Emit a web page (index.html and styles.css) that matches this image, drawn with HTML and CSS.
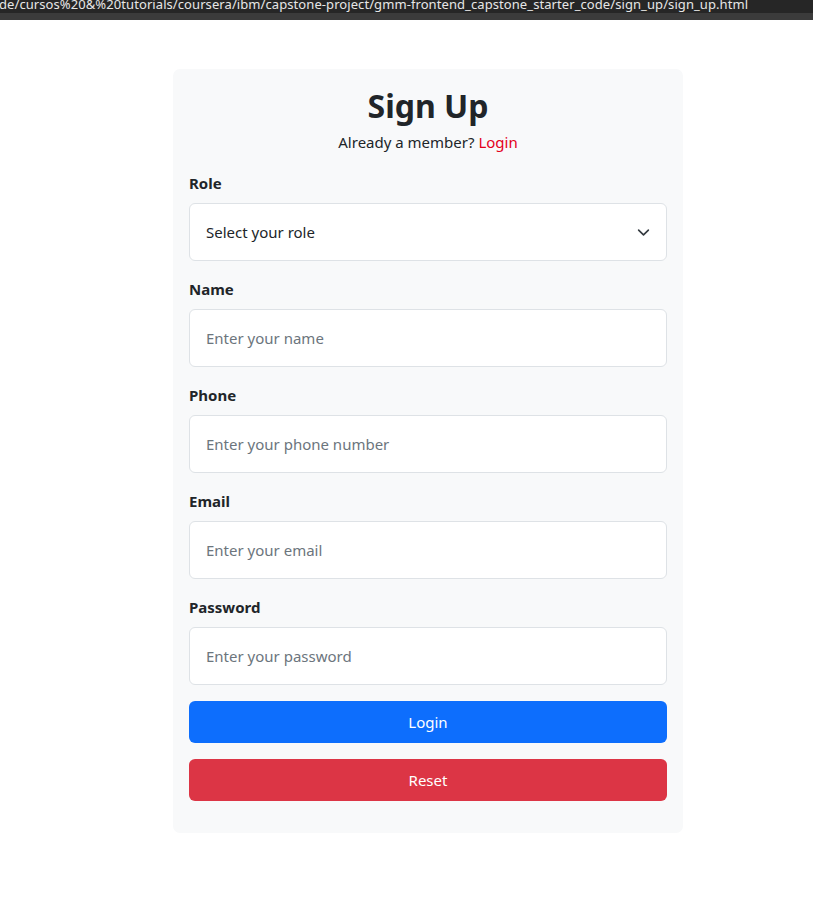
FILE: index.html
```html
<!DOCTYPE html>
<html lang="en">
<head>
<meta charset="utf-8">
<title>Sign Up</title>
<link rel="stylesheet" href="styles.css">
</head>
<body>
<div class="chrome">
  <div class="url"><span>de/cursos%20&amp;%20tutorials/coursera/ibm/capstone-project/gmm-frontend_capstone_starter_code/sign_up/sign_up.html</span></div>
  <div class="chrome-strip"></div>
</div>
<main class="page">
  <form class="card">
    <h1 class="title">Sign Up</h1>
    <p class="sub">Already a member? <a href="#" class="link">Login</a></p>

    <div class="field">
      <label class="label" for="role">Role</label>
      <div class="select">
        <span class="select-text">Select your role</span>
        <svg class="chev" width="16" height="16" viewBox="0 0 16 16"><path d="M2 5l6 6 6-6" fill="none" stroke="#343a40" stroke-width="2" stroke-linecap="round" stroke-linejoin="round"/></svg>
      </div>
    </div>

    <div class="field">
      <label class="label" for="name">Name</label>
      <input class="input" id="name" type="text" placeholder="Enter your name">
    </div>

    <div class="field">
      <label class="label" for="phone">Phone</label>
      <input class="input" id="phone" type="tel" placeholder="Enter your phone number">
    </div>

    <div class="field">
      <label class="label" for="email">Email</label>
      <input class="input" id="email" type="email" placeholder="Enter your email">
    </div>

    <div class="field">
      <label class="label" for="password">Password</label>
      <input class="input" id="password" type="password" placeholder="Enter your password">
    </div>

    <button type="button" class="btn btn-primary">Login</button>
    <button type="button" class="btn btn-danger">Reset</button>
  </form>
</main>
</body>
</html>
```

FILE: styles.css
```css
* { box-sizing: border-box; }
html, body { margin: 0; padding: 0; background: #fff; }
body {
  font-family: "Noto Sans", "Open Sans", sans-serif;
  color: #212529;
  font-size: 16px;
  line-height: 1.5;
}
.chrome { background: #262626; }
.url {
  height: 13px;
  overflow: hidden;
  color: #e6e6e6;
  font-size: 13px;
  white-space: nowrap;
}
.url span {
  display: block;
  line-height: 20px;
  margin-top: -6px;
  margin-left: -1px;
  letter-spacing: 0.08px;
}
.chrome-strip { height: 7px; background: #3b3b3b; }

.page { padding: 49px 0 0 173px; }
.card {
  width: 510px;
  background: #f8f9fa;
  border-radius: 7px;
  padding: 16px 16px 32px;
  display: flex;
  flex-direction: column;
}
.title {
  margin: 0;
  text-align: center;
  font-size: 32px;
  font-weight: 700;
  line-height: 41px;
}
.sub {
  margin: 4px 0 17px;
  text-align: center;
  font-size: 15px;
  line-height: 24px;
}
.link { color: #e4001b; text-decoration: none; }
.field { display: flex; flex-direction: column; margin-bottom: 16px; }
.label {
  font-weight: 700;
  font-size: 15px;
  line-height: 24px;
  margin-bottom: 8px;
}
.input, .select {
  height: 58px;
  width: 100%;
  border: 1px solid #dee2e6;
  border-radius: 6px;
  background: #fff;
  padding: 0 16px;
  font-family: inherit;
  font-size: 15px;
  color: #212529;
  outline: none;
}
.input::placeholder { color: #6c757d; }
.select { display: flex; align-items: center; justify-content: space-between; }
.chev { width: 13px; height: 13px; }
.btn {
  height: 42px;
  width: 100%;
  border: none;
  border-radius: 6px;
  color: #fff;
  font-family: inherit;
  font-size: 15px;
  cursor: pointer;
}
.btn-primary { background: #0d6efd; margin-bottom: 16px; }
.btn-danger { background: #dc3545; }
```
